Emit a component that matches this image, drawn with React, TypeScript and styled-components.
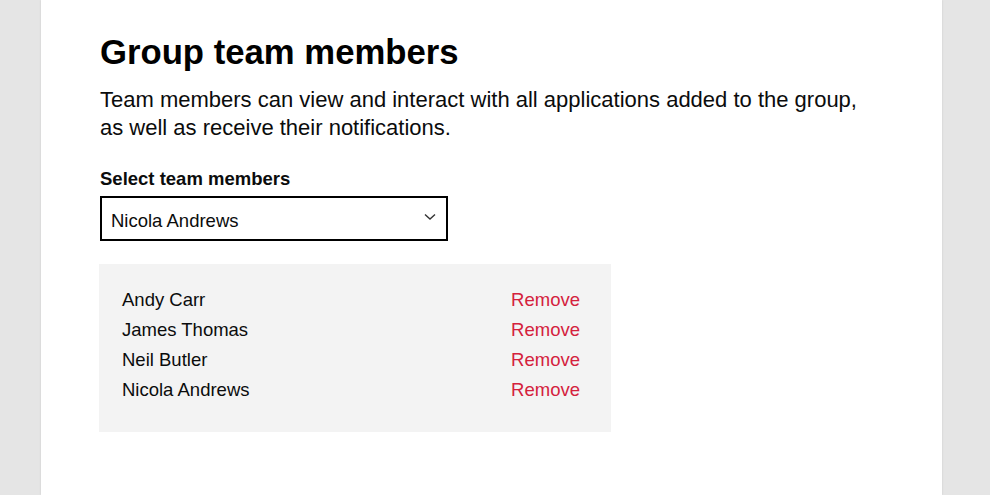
import React, { useState } from "react";
import styled, { createGlobalStyle } from "styled-components";

const GlobalStyle = createGlobalStyle`
    html, body {
        margin: 0;
        padding: 0;
        background: #e5e5e5;
        font-family: "Liberation Sans", Arial, sans-serif;
        color: #0b0c0c;
    }
`;

const Page = styled.div`
    height: 495px;
    overflow: hidden;
    display: flex;
    justify-content: center;
`;

const Panel = styled.main`
    width: 901px;
    margin-left: -7px;
    background: #ffffff;
    box-shadow: 0 0 2px rgba(0, 0, 0, 0.12);
    padding: 30px 59px 0;
    box-sizing: border-box;
`;

const Title = styled.h1`
    margin: 0 0 12px;
    font-size: 34.7px;
    line-height: 44px;
    font-weight: 700;
    color: #000;
`;

const Lead = styled.p`
    margin: 0 0 26px;
    font-size: 22px;
    line-height: 28px;
    color: #0b0c0c;
`;

const Label = styled.label`
    display: block;
    font-size: 18.5px;
    font-weight: 700;
    line-height: 22px;
    margin: 0 0 6px;
`;

const SelectWrap = styled.div`
    position: relative;
    width: 348px;
    margin-bottom: 23px;
`;

const Select = styled.select`
    appearance: none;
    width: 100%;
    height: 45px;
    border: 2px solid #000;
    border-radius: 0;
    background: #fff;
    padding: 3px 40px 0 9px;
    font-family: "Liberation Sans", Arial, sans-serif;
    font-size: 18.5px;
    color: #0b0c0c;
    outline: none;
`;

const Chevron = styled.svg`
    position: absolute;
    right: 12px;
    top: 17px;
    pointer-events: none;
`;

const MemberBox = styled.ul`
    list-style: none;
    margin: 0;
    width: 512px;
    box-sizing: border-box;
    background: #f3f3f3;
    padding: 21px 31px 27px 23px;
    margin-left: -1px;
`;

const Row = styled.li`
    display: flex;
    justify-content: space-between;
    align-items: center;
    font-size: 18.5px;
    line-height: 30px;
`;

const RemoveLink = styled.a`
    color: #d4213d;
    text-decoration: none;
    cursor: pointer;
`;

const options = ["Andy Carr", "James Thomas", "Neil Butler", "Nicola Andrews"];

const App = () => {
    const [selected, setSelected] = useState("Nicola Andrews");
    const [members, setMembers] = useState(options);

    return (
        <>
            <GlobalStyle />
            <Page>
                <Panel>
                    <Title>Group team members</Title>
                    <Lead>
                        Team members can view and interact with all applications
                        added to the group, as well as receive their
                        notifications.
                    </Lead>
                    <Label htmlFor="members">Select team members</Label>
                    <SelectWrap>
                        <Select
                            id="members"
                            value={selected}
                            onChange={(e) => setSelected(e.target.value)}
                        >
                            {options.map((o) => (
                                <option key={o}>{o}</option>
                            ))}
                        </Select>
                        <Chevron width="12" height="8" viewBox="0 0 12 8">
                            <path
                                d="M1 1.5 L6 6 L11 1.5"
                                fill="none"
                                stroke="#333"
                                strokeWidth="1.4"
                            />
                        </Chevron>
                    </SelectWrap>
                    <MemberBox>
                        {members.map((m) => (
                            <Row key={m}>
                                <span>{m}</span>
                                <RemoveLink
                                    onClick={() =>
                                        setMembers(members.filter((x) => x !== m))
                                    }
                                >
                                    Remove
                                </RemoveLink>
                            </Row>
                        ))}
                    </MemberBox>
                </Panel>
            </Page>
        </>
    );
};

export default App;
